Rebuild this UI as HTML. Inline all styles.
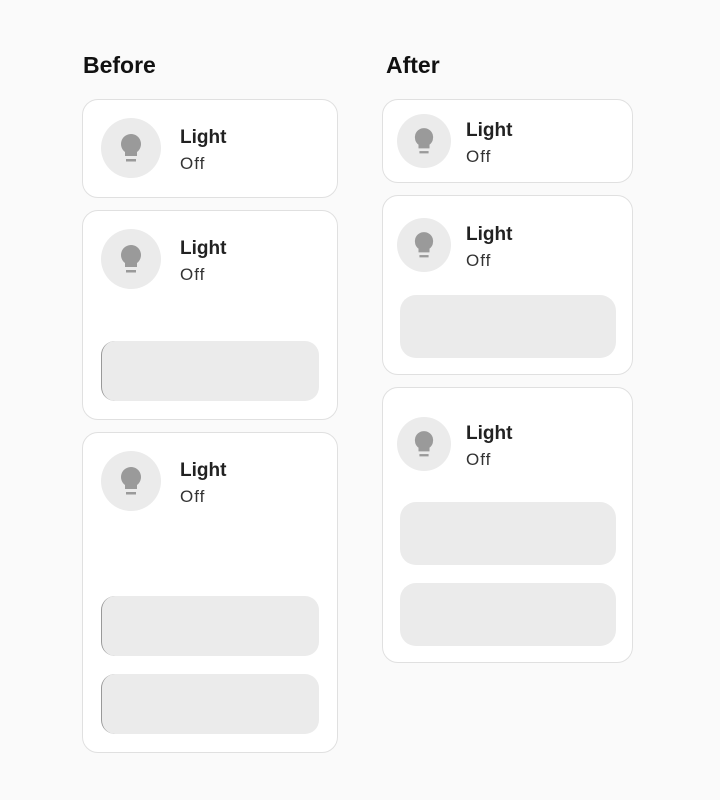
<!DOCTYPE html>
<html><head><style>
*{margin:0;padding:0;box-sizing:border-box}
body{width:720px;height:800px;background:#fafafa;position:relative;font-family:"Liberation Sans",Arial,sans-serif;overflow:hidden}
.h{position:absolute;top:52px;font-size:23px;font-weight:bold;color:#111}
.card{position:absolute;background:#fff;border:1px solid #e0e0e0;border-radius:16px}
.ic{position:absolute;border-radius:50%;background:#ebebeb}
.ic svg{position:absolute;left:50%;top:50%;transform:translate(-50%,-50%)}
.t{position:absolute;font-size:19px;font-weight:bold;color:#222}
.s{position:absolute;font-size:17px;color:#333;letter-spacing:1px}
.bar{position:absolute;background:#ebebeb;border-radius:14px}
.bb{border-left:1px solid #999}
</style></head><body>
<div class="h" style="left:83px">Before</div>
<div class="h" style="left:386px">After</div>

<div class="card" style="left:82px;top:99px;width:256px;height:99px"></div>
<div class="card" style="left:82px;top:210px;width:256px;height:210px"></div>
<div class="card" style="left:82px;top:432px;width:256px;height:321px"></div>

<div class="card" style="left:382px;top:99px;width:251px;height:84px"></div>
<div class="card" style="left:382px;top:195px;width:251px;height:180px"></div>
<div class="card" style="left:382px;top:387px;width:251px;height:276px"></div>

<div class="bar bb" style="left:101px;top:341px;width:218px;height:60px"></div>
<div class="bar bb" style="left:101px;top:596px;width:218px;height:60px"></div>
<div class="bar bb" style="left:101px;top:674px;width:218px;height:60px"></div>
<div class="bar" style="left:400px;top:295px;width:216px;height:63px;border-radius:16px"></div>
<div class="bar" style="left:400px;top:502px;width:216px;height:63px;border-radius:16px"></div>
<div class="bar" style="left:400px;top:583px;width:216px;height:63px;border-radius:16px"></div>

<div class="ic" style="left:101px;top:118px;width:60px;height:60px"><svg width="24" height="30" viewBox="0 0 24 30"><path d="M12 1a10 10 0 0 0-6 18v4h12v-4a10 10 0 0 0-6-18z" fill="#9a9a9a"/><rect x="7" y="26" width="10" height="2.5" fill="#9a9a9a"/></svg></div>
<div class="ic" style="left:101px;top:229px;width:60px;height:60px"><svg width="24" height="30" viewBox="0 0 24 30"><path d="M12 1a10 10 0 0 0-6 18v4h12v-4a10 10 0 0 0-6-18z" fill="#9a9a9a"/><rect x="7" y="26" width="10" height="2.5" fill="#9a9a9a"/></svg></div>
<div class="ic" style="left:101px;top:451px;width:60px;height:60px"><svg width="24" height="30" viewBox="0 0 24 30"><path d="M12 1a10 10 0 0 0-6 18v4h12v-4a10 10 0 0 0-6-18z" fill="#9a9a9a"/><rect x="7" y="26" width="10" height="2.5" fill="#9a9a9a"/></svg></div>
<div class="ic" style="left:397px;top:114px;width:54px;height:54px"><svg width="22" height="28" viewBox="0 0 24 30"><path d="M12 1a10 10 0 0 0-6 18v4h12v-4a10 10 0 0 0-6-18z" fill="#9a9a9a"/><rect x="7" y="26" width="10" height="2.5" fill="#9a9a9a"/></svg></div>
<div class="ic" style="left:397px;top:218px;width:54px;height:54px"><svg width="22" height="28" viewBox="0 0 24 30"><path d="M12 1a10 10 0 0 0-6 18v4h12v-4a10 10 0 0 0-6-18z" fill="#9a9a9a"/><rect x="7" y="26" width="10" height="2.5" fill="#9a9a9a"/></svg></div>
<div class="ic" style="left:397px;top:417px;width:54px;height:54px"><svg width="22" height="28" viewBox="0 0 24 30"><path d="M12 1a10 10 0 0 0-6 18v4h12v-4a10 10 0 0 0-6-18z" fill="#9a9a9a"/><rect x="7" y="26" width="10" height="2.5" fill="#9a9a9a"/></svg></div>

<div class="t" style="left:180px;top:127px">Light</div><div class="s" style="left:180px;top:154px">Off</div>
<div class="t" style="left:180px;top:238px">Light</div><div class="s" style="left:180px;top:265px">Off</div>
<div class="t" style="left:180px;top:460px">Light</div><div class="s" style="left:180px;top:487px">Off</div>
<div class="t" style="left:466px;top:120px">Light</div><div class="s" style="left:466px;top:147px">Off</div>
<div class="t" style="left:466px;top:224px">Light</div><div class="s" style="left:466px;top:251px">Off</div>
<div class="t" style="left:466px;top:423px">Light</div><div class="s" style="left:466px;top:450px">Off</div>
</body></html>
